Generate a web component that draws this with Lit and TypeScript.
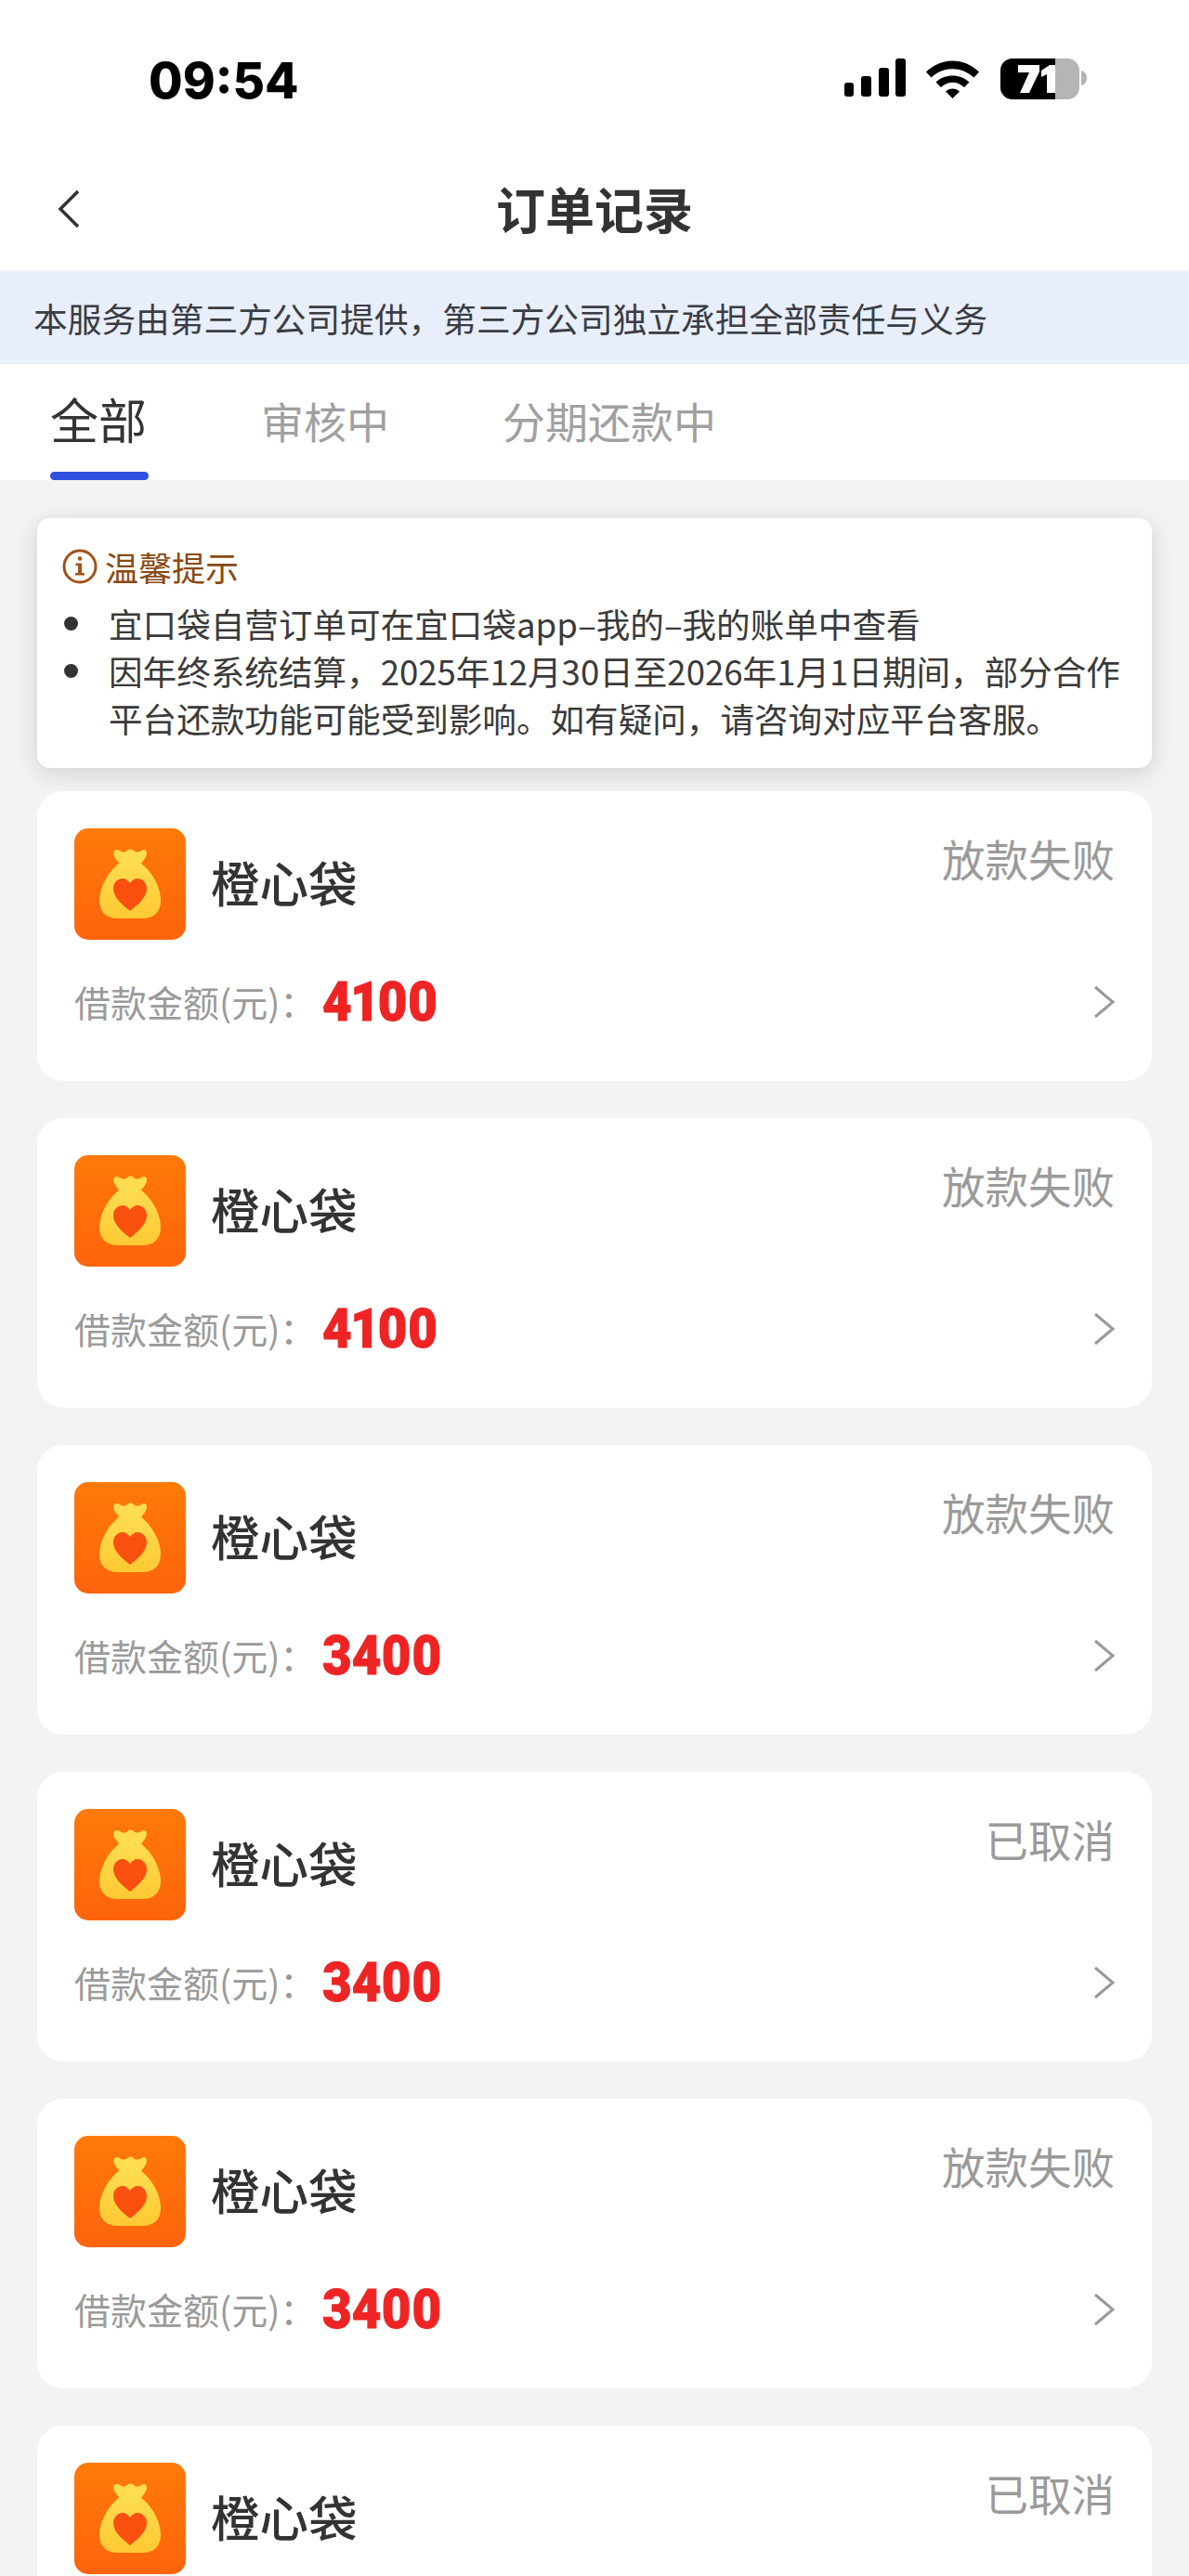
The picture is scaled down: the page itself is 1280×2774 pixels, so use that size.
import { LitElement, html, css, svg } from "lit";
import { customElement } from "lit/decorators.js";

const orders = [
  { amount: "4100", status: "放款失败" },
  { amount: "4100", status: "放款失败" },
  { amount: "3400", status: "放款失败" },
  { amount: "3400", status: "已取消" },
  { amount: "3400", status: "放款失败" },
  { amount: "3400", status: "已取消" },
];

const bagIcon = svg`
  <defs>
    <linearGradient id="bg" x1="0" y1="0" x2="0" y2="1">
      <stop offset="0" stop-color="#ff7a08"/>
      <stop offset="1" stop-color="#ff640c"/>
    </linearGradient>
    <linearGradient id="bag" x1="0" y1="0" x2="0" y2="1">
      <stop offset="0" stop-color="#ffdc50"/>
      <stop offset="1" stop-color="#ffc933"/>
    </linearGradient>
  </defs>
  <rect width="120" height="120" rx="15" fill="url(#bg)"/>
  <path fill="#ffdc50" d="M49 39C47 35 42 31 42 27C42 23 46 22 49 24C52 26 55 26 57 24C59 22 62 22 64 24C66 26 69 26 72 24C75 22 78 23 78 27C78 31 74 35 71 39Z"/>
  <path fill="url(#bag)" d="M49 37C38 45 27 62 27 78C27 91 36 97 46 97H74C84 97 93 91 93 78C93 62 82 45 71 37Z"/>
  <path fill="#f9500f" d="M60 89C51 82 42 74 42 65C42 58 47 54 52 54C55 54 58 56 60 59C62 56 65 54 68 54C73 54 78 58 78 65C78 74 69 82 60 89Z"/>
`;

@customElement("app-root")
export class AppRoot extends LitElement {
  static styles = css`
    :host {
      display: block;
      width: 1280px;
      height: 2774px;
      overflow: hidden;
      background: #f3f3f3;
      font-family: "Noto Sans CJK SC", "Noto Sans", sans-serif;
      color: #333;
    }
    .status {
      height: 170px;
      background: #fff;
      display: flex;
      align-items: flex-start;
      justify-content: space-between;
      padding: 58px 109px 0 160px;
      box-sizing: border-box;
    }
    .time {
      font-family: Inter, "Liberation Sans", sans-serif;
      font-weight: 800;
      font-size: 53px;
      line-height: 58px;
      color: #000;
    }
    .sys {
      display: flex;
      align-items: flex-start;
      margin-top: 5px;
    }
    .nav {
      height: 122px;
      background: #fff;
      display: flex;
      align-items: center;
      justify-content: center;
      position: relative;
    }
    .nav h1 {
      margin: 0;
      font-size: 53px;
      line-height: 70px;
      font-weight: 700;
      color: #333;
      position: relative;
      top: -7px;
    }
    .back {
      position: absolute;
      left: 60px;
      top: 33px;
    }
    .banner {
      height: 100px;
      background: #e8eefb;
      display: flex;
      align-items: center;
      padding-left: 36px;
      font-size: 36.7px;
      color: #3a3d44;
      white-space: nowrap;
    }
    .tabs {
      height: 125px;
      background: #fff;
      display: flex;
      align-items: flex-start;
      padding-left: 54px;
      box-sizing: border-box;
    }
    .tab {
      font-size: 46px;
      line-height: 62px;
      color: #a0a0a0;
      margin-top: 29px;
      white-space: nowrap;
    }
    .tab.two { margin-left: 123px; }
    .tab.three { margin-left: 122px; }
    .tab.active {
      font-size: 52px;
      line-height: 70px;
      margin-top: 24px;
      color: #333;
      position: relative;
    }
    .tab.active::after {
      content: "";
      position: absolute;
      left: 0;
      right: -2px;
      top: 92px;
      height: 9px;
      border-radius: 5px;
      background: #2f4fdc;
    }
    .list {
      padding: 41px 40px 0;
      display: flex;
      flex-direction: column;
    }
    .notice {
      height: 269px;
      box-sizing: border-box;
      background: #fff;
      border-radius: 14px;
      box-shadow: 0 6px 26px rgba(0, 0, 0, 0.14);
      padding: 27px 32px 0 27px;
      margin-bottom: 25px;
    }
    .notice-title {
      display: flex;
      align-items: center;
      gap: 8px;
      font-size: 36px;
      line-height: 50px;
      color: #8a4a12;
    }
    .notice ul {
      margin: 11px 0 0;
      padding: 0;
      list-style: none;
      font-size: 36.6px;
      line-height: 51px;
      color: #3a3a3a;
    }
    .notice li {
      position: relative;
      padding-left: 50px;
      white-space: nowrap;
    }
    .notice li::before {
      content: "";
      position: absolute;
      left: 2px;
      top: 18px;
      width: 15px;
      height: 15px;
      border-radius: 50%;
      background: #333;
    }
    .card {
      height: 312px;
      flex: none;
      box-sizing: border-box;
      background: #fff;
      border-radius: 28px;
      margin-bottom: 40px;
      padding: 40px 40px 0;
      display: flex;
      flex-direction: column;
    }
    .row1 {
      display: flex;
      align-items: flex-start;
      height: 120px;
    }
    .logo { width: 120px; height: 120px; flex: none; }
    .name {
      margin-left: 27px;
      font-size: 52.5px;
      line-height: 70px;
      font-weight: 500;
      color: #333;
      margin-top: 22px;
    }
    .state {
      margin-left: auto;
      font-size: 46.5px;
      line-height: 62px;
      color: #9a9a9a;
      margin-top: 1px;
    }
    .row2 {
      display: flex;
      align-items: center;
      height: 94px;
      margin-top: 20px;
    }
    .label {
      font-size: 39px;
      line-height: 50px;
      color: #9a9a9a;
      white-space: nowrap;
      width: 267px;
      flex: none;
      margin-bottom: 3px;
    }
    .amount {
      display: inline-block;
      font-family: Roboto, "Liberation Sans", sans-serif;
      font-weight: 900;
      font-size: 60px;
      line-height: 70px;
      font-variant-numeric: proportional-nums;
      color: #ee2424;
      -webkit-text-stroke: 1px #ee2424;
      transform: scaleX(0.91);
      transform-origin: left center;
    }
    .chev { margin-left: auto; }
  `;

  render() {
    return html`
      <div class="status">
        <div class="time">09:54</div>
        <svg class="sys" width="262" height="46" viewBox="0 0 262 46" aria-hidden="true">
          <rect x="0" y="26" width="10" height="15" rx="3" fill="#000"/>
          <rect x="18" y="19" width="11" height="22" rx="3" fill="#000"/>
          <rect x="37" y="10" width="11" height="31" rx="3" fill="#000"/>
          <rect x="55" y="0" width="11" height="41" rx="3" fill="#000"/>
          <path d="M88 14.500C104 -1.500 129 -1.500 145 14.500L139.500 20.500C126 8 107 8 93.500 20.500Z" fill="#000"/>
          <path d="M98.500 25.500C108 16 125 16 134.500 25.500L129 31C121.500 24 111.500 24 104 31Z" fill="#000"/>
          <path d="M109 35.500C113 31.500 120 31.500 124 35.500L116.500 43Z" fill="#000"/>
          <rect x="168" y="0" width="85" height="44" rx="13" fill="#b5b5b5"/>
          <path d="M181 0H227V44H181A13 13 0 0 1 168 31V13A13 13 0 0 1 181 0Z" fill="#000"/>
          <path d="M255 13C259 14 261 17 261 21C261 25 259 28 255 29Z" fill="#b5b5b5"/>
          <path d="M187 7H210V14L199 37H189L199 15H187Z" fill="#fff"/>
          <path d="M212 13L221 7H227V37H218V17L212 20Z" fill="#fff"/>
        </svg>
      </div>
      <div class="nav">
        <svg class="back" width="28" height="44" viewBox="0 0 28 44" aria-hidden="true">
          <path d="M24 3L5 22L24 41" fill="none" stroke="#333" stroke-width="3.500"/>
        </svg>
        <h1>订单记录</h1>
      </div>
      <div class="banner">本服务由第三方公司提供，第三方公司独立承担全部责任与义务</div>
      <div class="tabs">
        <div class="tab active">全部</div>
        <div class="tab two">审核中</div>
        <div class="tab three">分期还款中</div>
      </div>
      <div class="list">
        <div class="notice">
          <div class="notice-title">
            <svg width="38" height="38" viewBox="0 0 38 38" aria-hidden="true">
              <circle cx="19" cy="19" r="17" fill="none" stroke="#a0531a" stroke-width="3"/>
              <circle cx="19" cy="10.500" r="2.300" fill="#a0531a"/>
              <path d="M14.500 15.500H21V26H24V28.500H14V26H17V18H14.500Z" fill="#a0531a"/>
            </svg>
            <span>温馨提示</span>
          </div>
          <ul>
            <li>宜口袋自营订单可在宜口袋app–我的–我的账单中查看</li>
            <li>因年终系统结算，2025年12月30日至2026年1月1日期间，部分合作<br />平台还款功能可能受到影响。如有疑问，请咨询对应平台客服。</li>
          </ul>
        </div>
        ${orders.map(
          (o) => html`
            <div class="card">
              <div class="row1">
                <svg class="logo" viewBox="0 0 120 120" aria-hidden="true">${bagIcon}</svg>
                <div class="name">橙心袋</div>
                <div class="state">${o.status}</div>
              </div>
              <div class="row2">
                <span class="label">借款金额(元)：</span>
                <span class="amount">${o.amount}</span>
                <svg class="chev" width="24" height="36" viewBox="0 0 24 36" aria-hidden="true">
                  <path d="M3 2L22 18L3 34" fill="none" stroke="#999" stroke-width="3"/>
                </svg>
              </div>
            </div>
          `
        )}
      </div>
    `;
  }
}
